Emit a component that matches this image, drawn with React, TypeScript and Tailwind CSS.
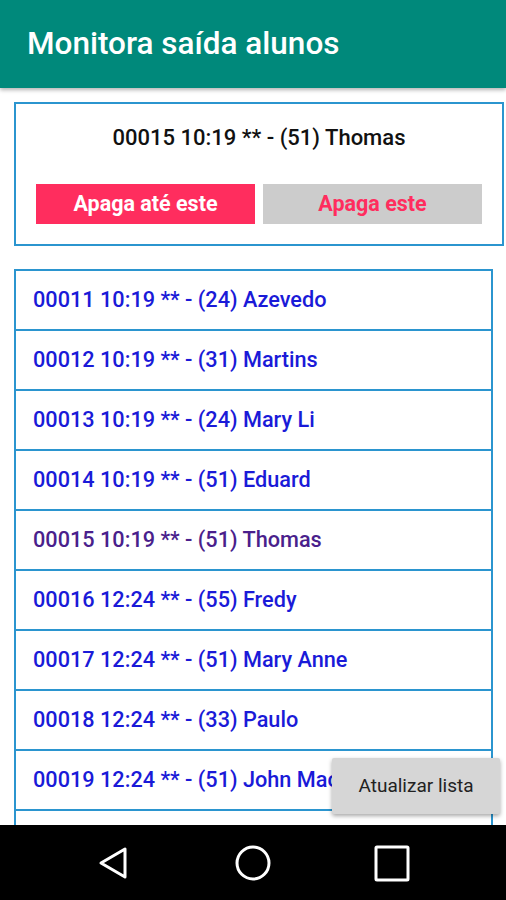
const rows = [
  { text: "00011 10:19 ** - (24) Azevedo" },
  { text: "00012 10:19 ** - (31) Martins" },
  { text: "00013 10:19 ** - (24) Mary Li" },
  { text: "00014 10:19 ** - (51) Eduard" },
  { text: "00015 10:19 ** - (51) Thomas", visited: true },
  { text: "00016 12:24 ** - (55) Fredy" },
  { text: "00017 12:24 ** - (51) Mary Anne" },
  { text: "00018 12:24 ** - (33) Paulo" },
  { text: "00019 12:24 ** - (51) John Mac" },
  { text: "00020 12:24 ** - (24) Ana" },
];

export default function App() {
  return (
    <div className="relative w-[506px] h-[900px] overflow-hidden bg-white font-['Roboto',sans-serif]">
      <div className="h-[88px] bg-[#00897b] flex items-center px-[27px] shadow-[0_2px_4px_rgba(0,0,0,0.3)] relative z-10">
        <h1 className="text-white text-[31.5px] leading-[38px] font-medium">Monitora saída alunos</h1>
      </div>

      <div className="ml-[14px] mr-[2px] mt-[14px] h-[144px] border-2 border-[#2b95cf] flex flex-col">
        <p className="text-center text-[22px] leading-[26px] font-medium text-[#111] mt-[21px]">00015 10:19 ** - (51) Thomas</p>
        <div className="flex gap-[8px] px-[20px] mt-[33px]">
          <button className="w-[220px] h-[40px] bg-[#ff2d5e] text-white text-[21.5px] font-bold">Apaga até este</button>
          <button className="w-[220px] h-[40px] bg-[#cccccc] text-[#ff2d5e] text-[21.5px] font-bold">Apaga este</button>
        </div>
      </div>

      <div className="ml-[14px] w-[479px] mt-[23px] border-x-2 border-t-2 border-[#2b95cf]">
        {rows.map((r) => (
          <div key={r.text} className="h-[60px] border-b-2 border-[#2b95cf] flex items-center pl-[17px]">
            <span className={`text-[21.7px] leading-[26px] font-medium ${r.visited ? "text-[#4a1f8c]" : "text-[#1a1ad8]"}`}>{r.text}</span>
          </div>
        ))}
      </div>

      <button className="absolute left-[332px] top-[758px] w-[168px] h-[56px] bg-[#d6d6d6] text-[#222] text-[19px] shadow-[0_2px_4px_rgba(0,0,0,0.35)] rounded-[2px]">
        Atualizar lista
      </button>

      <div className="absolute left-0 bottom-0 w-full h-[75px] bg-black flex items-center justify-center gap-[98px]">
        <svg width="40" height="40" viewBox="0 0 40 40" fill="none" stroke="white" strokeWidth="3" strokeLinejoin="round">
          <path d="M30 6 L30 34 L6 20 Z" />
        </svg>
        <svg width="40" height="40" viewBox="0 0 40 40" fill="none" stroke="white" strokeWidth="3">
          <circle cx="20" cy="20" r="16" />
        </svg>
        <svg width="40" height="40" viewBox="0 0 40 40" fill="none" stroke="white" strokeWidth="3">
          <rect x="5" y="4" width="32" height="33" rx="1" />
        </svg>
      </div>
    </div>
  );
}
